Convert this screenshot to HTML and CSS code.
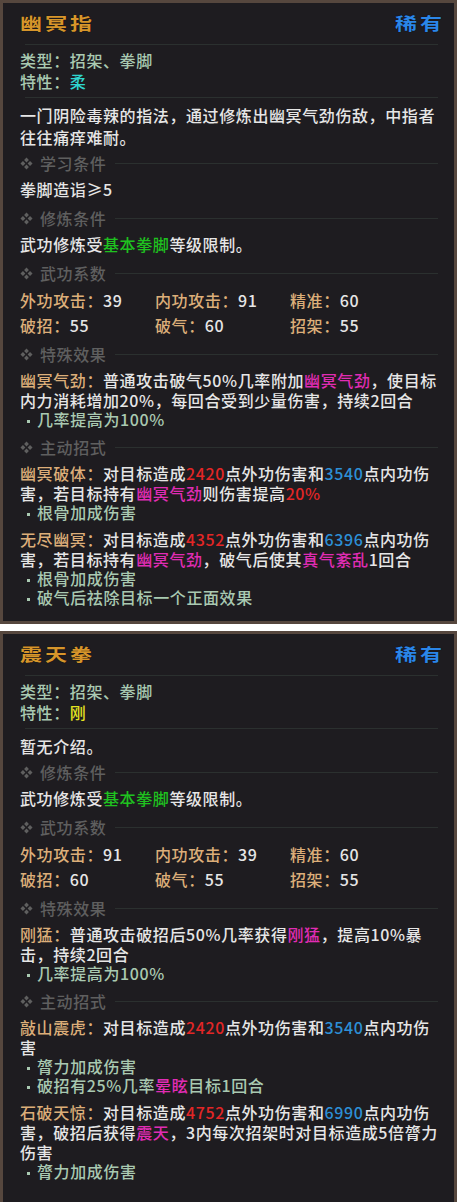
FILE: index.html
```html
<!DOCTYPE html>
<html lang="zh-CN">
<head>
    <meta charset="UTF-8">
    <meta name="viewport" content="width=device-width, initial-scale=1.0">
    <title>武功详情</title>
    <link rel="stylesheet" href="styles.css">
</head>
<body>
    <!-- 幽冥指 -->
    <div class="card">
        <div class="title-row">
            <span class="title">幽冥指</span>
            <span class="rarity">稀有</span>
        </div>
        <div class="rule"></div>
        <div class="info">
            <p>类型：招架、拳脚</p>
            <p>特性：<span class="cyan">柔</span></p>
        </div>
        <div class="rule short"></div>
        <p class="desc">一门阴险毒辣的指法，通过修炼出幽冥气劲伤敌，中指者往往痛痒难耐。</p>

        <div class="section first">
            <div class="sec-head"><svg class="dia" viewBox="0 0 14 14"><path d="M7 0.5L9.6 3.2 7 5.8 4.4 3.2Z M13.5 7L10.8 9.6 8.2 7 10.8 4.4Z M7 13.5L4.4 10.8 7 8.2 9.6 10.8Z M0.5 7L3.2 4.4 5.8 7 3.2 9.6Z"/></svg><span>学习条件</span></div>
            <p class="text">拳脚造诣≥5</p>
        </div>

        <div class="section">
            <div class="sec-head"><svg class="dia" viewBox="0 0 14 14"><path d="M7 0.5L9.6 3.2 7 5.8 4.4 3.2Z M13.5 7L10.8 9.6 8.2 7 10.8 4.4Z M7 13.5L4.4 10.8 7 8.2 9.6 10.8Z M0.5 7L3.2 4.4 5.8 7 3.2 9.6Z"/></svg><span>修炼条件</span></div>
            <p class="text">武功修炼受<span class="green">基本拳脚</span>等级限制。</p>
        </div>

        <div class="section">
            <div class="sec-head"><svg class="dia" viewBox="0 0 14 14"><path d="M7 0.5L9.6 3.2 7 5.8 4.4 3.2Z M13.5 7L10.8 9.6 8.2 7 10.8 4.4Z M7 13.5L4.4 10.8 7 8.2 9.6 10.8Z M0.5 7L3.2 4.4 5.8 7 3.2 9.6Z"/></svg><span>武功系数</span></div>
            <div class="stats">
                <div><span class="tan">外功攻击：</span>39</div>
                <div><span class="tan">内功攻击：</span>91</div>
                <div><span class="tan">精准：</span>60</div>
                <div><span class="tan">破招：</span>55</div>
                <div><span class="tan">破气：</span>60</div>
                <div><span class="tan">招架：</span>55</div>
            </div>
        </div>

        <div class="section">
            <div class="sec-head"><svg class="dia" viewBox="0 0 14 14"><path d="M7 0.5L9.6 3.2 7 5.8 4.4 3.2Z M13.5 7L10.8 9.6 8.2 7 10.8 4.4Z M7 13.5L4.4 10.8 7 8.2 9.6 10.8Z M0.5 7L3.2 4.4 5.8 7 3.2 9.6Z"/></svg><span>特殊效果</span></div>
            <div class="skill">
                <p class="skill-text"><span class="tan">幽冥气劲：</span>普通攻击破气50%几率附加<span class="pink">幽冥气劲</span>，使目标内力消耗增加20%，每回合受到少量伤害，持续2回合</p>
                <p class="bullet">几率提高为100%</p>
            </div>
        </div>

        <div class="section">
            <div class="sec-head"><svg class="dia" viewBox="0 0 14 14"><path d="M7 0.5L9.6 3.2 7 5.8 4.4 3.2Z M13.5 7L10.8 9.6 8.2 7 10.8 4.4Z M7 13.5L4.4 10.8 7 8.2 9.6 10.8Z M0.5 7L3.2 4.4 5.8 7 3.2 9.6Z"/></svg><span>主动招式</span></div>
            <div class="skill">
                <p class="skill-text"><span class="tan">幽冥破体：</span>对目标造成<span class="red">2420</span>点外功伤害和<span class="blue">3540</span>点内功伤害，若目标持有<span class="pink">幽冥气劲</span>则伤害提高<span class="red">20%</span></p>
                <p class="bullet">根骨加成伤害</p>
            </div>
            <div class="skill">
                <p class="skill-text"><span class="tan">无尽幽冥：</span>对目标造成<span class="red">4352</span>点外功伤害和<span class="blue">6396</span>点内功伤害，若目标持有<span class="pink">幽冥气劲</span>，破气后使其<span class="pink">真气紊乱</span>1回合</p>
                <p class="bullet">根骨加成伤害</p>
                <p class="bullet">破气后祛除目标一个正面效果</p>
            </div>
        </div>
    </div>

    <!-- 震天拳 -->
    <div class="card">
        <div class="title-row">
            <span class="title">震天拳</span>
            <span class="rarity">稀有</span>
        </div>
        <div class="rule"></div>
        <div class="info">
            <p>类型：招架、拳脚</p>
            <p>特性：<span class="yellow">刚</span></p>
        </div>
        <div class="rule short"></div>
        <p class="desc">暂无介绍。</p>

        <div class="section first">
            <div class="sec-head"><svg class="dia" viewBox="0 0 14 14"><path d="M7 0.5L9.6 3.2 7 5.8 4.4 3.2Z M13.5 7L10.8 9.6 8.2 7 10.8 4.4Z M7 13.5L4.4 10.8 7 8.2 9.6 10.8Z M0.5 7L3.2 4.4 5.8 7 3.2 9.6Z"/></svg><span>修炼条件</span></div>
            <p class="text">武功修炼受<span class="green">基本拳脚</span>等级限制。</p>
        </div>

        <div class="section">
            <div class="sec-head"><svg class="dia" viewBox="0 0 14 14"><path d="M7 0.5L9.6 3.2 7 5.8 4.4 3.2Z M13.5 7L10.8 9.6 8.2 7 10.8 4.4Z M7 13.5L4.4 10.8 7 8.2 9.6 10.8Z M0.5 7L3.2 4.4 5.8 7 3.2 9.6Z"/></svg><span>武功系数</span></div>
            <div class="stats">
                <div><span class="tan">外功攻击：</span>91</div>
                <div><span class="tan">内功攻击：</span>39</div>
                <div><span class="tan">精准：</span>60</div>
                <div><span class="tan">破招：</span>60</div>
                <div><span class="tan">破气：</span>55</div>
                <div><span class="tan">招架：</span>55</div>
            </div>
        </div>

        <div class="section">
            <div class="sec-head"><svg class="dia" viewBox="0 0 14 14"><path d="M7 0.5L9.6 3.2 7 5.8 4.4 3.2Z M13.5 7L10.8 9.6 8.2 7 10.8 4.4Z M7 13.5L4.4 10.8 7 8.2 9.6 10.8Z M0.5 7L3.2 4.4 5.8 7 3.2 9.6Z"/></svg><span>特殊效果</span></div>
            <div class="skill">
                <p class="skill-text"><span class="tan">刚猛：</span>普通攻击破招后50%几率获得<span class="pink">刚猛</span>，提高10%暴击，持续2回合</p>
                <p class="bullet">几率提高为100%</p>
            </div>
        </div>

        <div class="section">
            <div class="sec-head"><svg class="dia" viewBox="0 0 14 14"><path d="M7 0.5L9.6 3.2 7 5.8 4.4 3.2Z M13.5 7L10.8 9.6 8.2 7 10.8 4.4Z M7 13.5L4.4 10.8 7 8.2 9.6 10.8Z M0.5 7L3.2 4.4 5.8 7 3.2 9.6Z"/></svg><span>主动招式</span></div>
            <div class="skill">
                <p class="skill-text"><span class="tan">敲山震虎：</span>对目标造成<span class="red">2420</span>点外功伤害和<span class="blue">3540</span>点内功伤害</p>
                <p class="bullet">膂力加成伤害</p>
                <p class="bullet">破招有25%几率<span class="pink">晕眩</span>目标1回合</p>
            </div>
            <div class="skill">
                <p class="skill-text"><span class="tan">石破天惊：</span>对目标造成<span class="red">4752</span>点外功伤害和<span class="blue">6990</span>点内功伤害，破招后获得<span class="pink">震天</span>，3内每次招架时对目标造成5倍膂力伤害</p>
                <p class="bullet">膂力加成伤害</p>
            </div>
        </div>
    </div>
</body>
</html>
```

FILE: styles.css
```css
body {
    margin: 0;
    background-color: #ffffff;
    font-family: "Noto Sans CJK SC", "Noto Sans", sans-serif;
    font-size: 16px;
    font-weight: 500;
    letter-spacing: 0.6px;
    color: #e6e6e6;
}
p {
    margin: 0;
}
.card {
    background-color: #1e1c20;
    border: 3px solid #56473e;
    padding: 7px 14px 14px 17px;
}
.card + .card {
    margin-top: 7px;
    padding-bottom: 40px;
}
.title-row {
    display: flex;
    justify-content: space-between;
    height: 24px;
    line-height: 24px;
    font-size: 22px;
    font-weight: 700;
    letter-spacing: 3px;
}
.title, .rarity {
    display: inline-block;
    transform: scaleY(0.78);
    text-shadow: 0 0 1px #000;
}
.title {
    color: #d6952b;
}
.rarity {
    color: #2b86e8;
    margin-right: -5px;
}
.rule {
    height: 1px;
    margin: 10px 2px 0 5px;
    background-color: #2b302f;
}
.rule.short {
    margin-top: 5px;
}
.info {
    margin-top: 5px;
    line-height: 21px;
    color: #a9c9b1;
}
.desc {
    margin-top: 6px;
    line-height: 22px;
}
.section {
    margin-top: 8px;
}
.section.first {
    margin-top: 5px;
}
.sec-head {
    display: flex;
    align-items: center;
    height: 20px;
    color: #5f5f5f;
    margin-bottom: 6px;
}
.sec-head::after {
    content: "";
    flex: 1;
    height: 1px;
    margin: 0 2px 0 9px;
    background-color: #2b302f;
}
.dia {
    width: 13px;
    height: 13px;
    fill: #5f5f5f;
    margin-right: 7px;
}
.text {
    line-height: 21px;
}
.stats {
    display: grid;
    grid-template-columns: 135px 135px 1fr;
    row-gap: 3px;
    line-height: 22px;
    margin-bottom: 2px;
}
.skill-text {
    line-height: 20px;
}
.skill + .skill {
    margin-top: 7px;
}
.bullet {
    line-height: 19px;
    padding-left: 7px;
    color: #a9c9b1;
}
.bullet::before {
    content: "";
    display: inline-block;
    width: 3px;
    height: 3px;
    margin-right: 7px;
    vertical-align: middle;
    background-color: #a9c9b1;
}
.tan { color: #dcae79; }
.pink { color: #e02cb4; }
.red { color: #e32626; }
.blue { color: #2d8fd6; }
.green { color: #1fc21f; }
.yellow { color: #e3e321; }
.cyan { color: #2fd5cf; }
```
